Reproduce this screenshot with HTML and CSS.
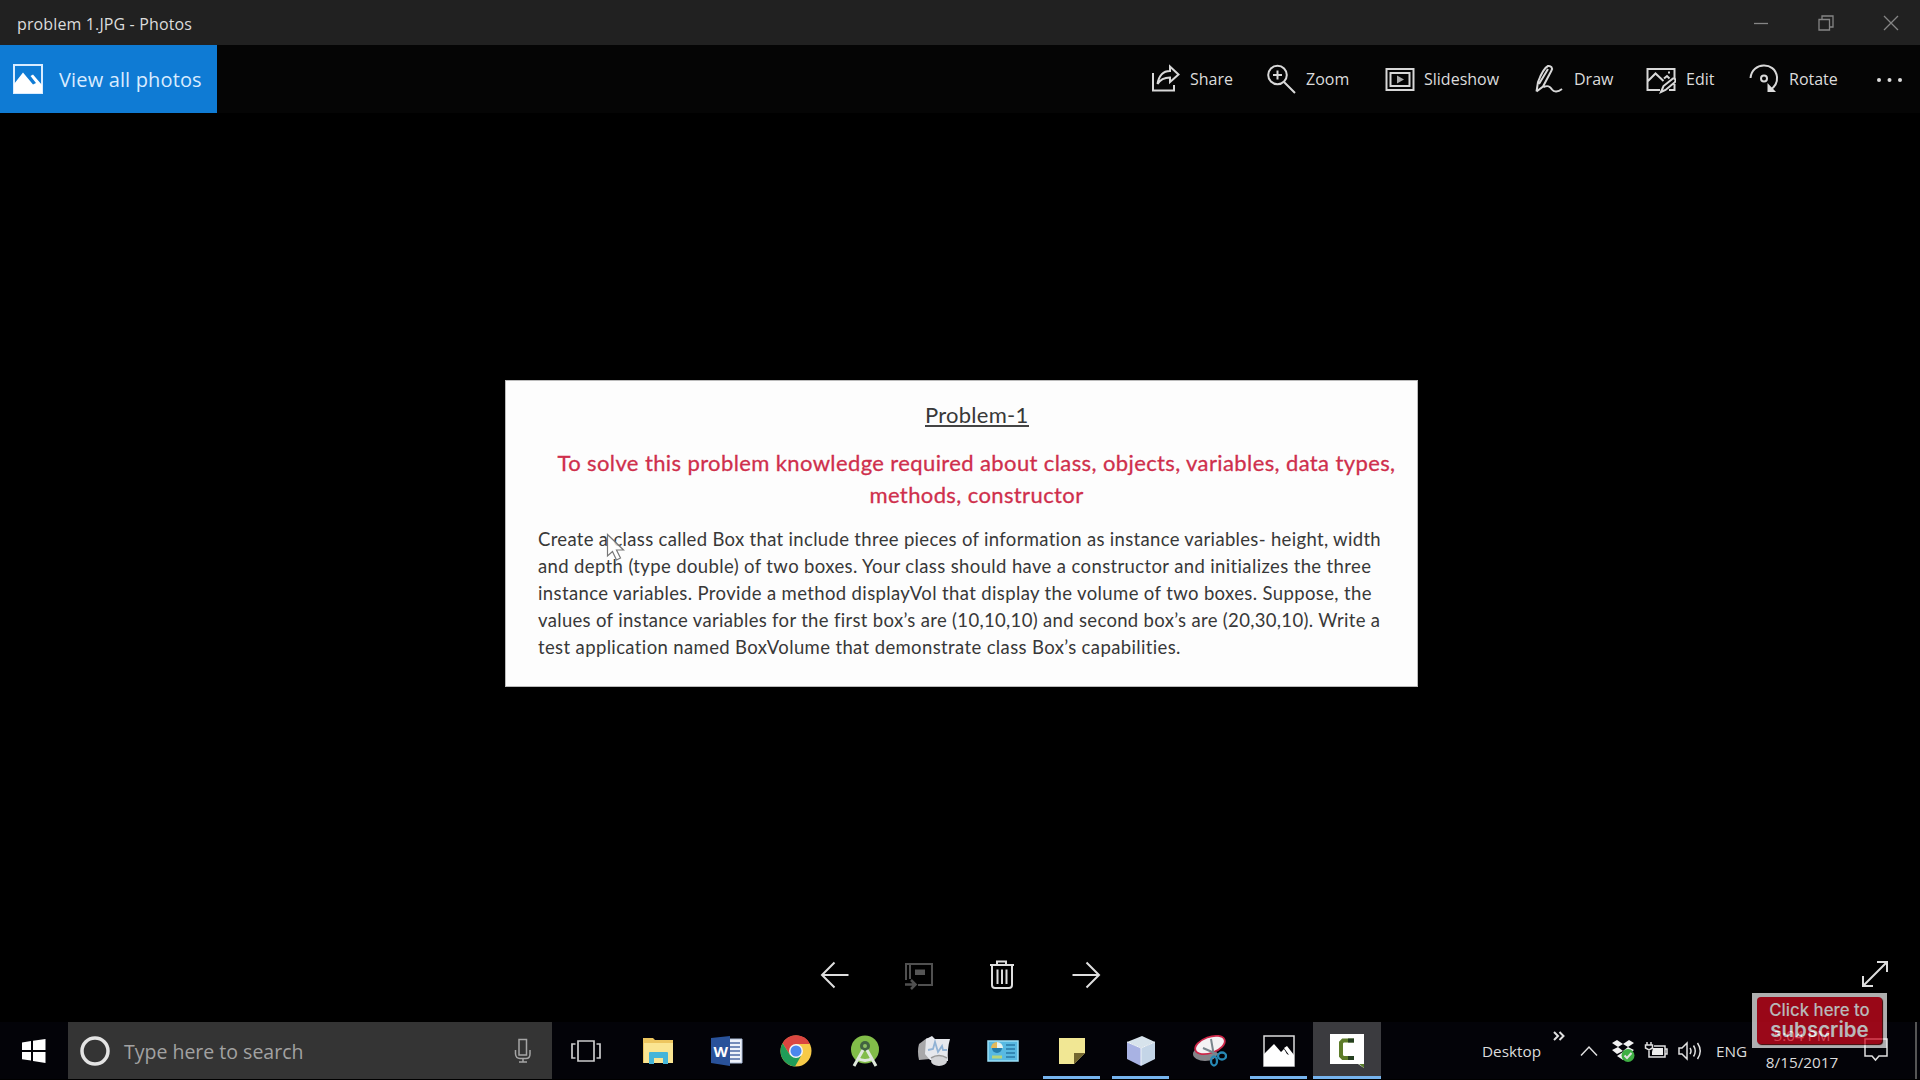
FILE: index.html
```html
<!DOCTYPE html>
<html lang="en">
<head>
<meta charset="utf-8">
<title>problem 1.JPG - Photos</title>
<link rel="stylesheet" href="styles.css">
</head>
<body>
<div class="app">
  <header class="titlebar">
    <span class="title">problem 1.JPG - Photos</span>
    <div class="win-buttons">
      <svg width="16" height="16" viewBox="0 0 16 16"><path d="M1 8.500H15"/></svg>
      <svg width="16" height="16" viewBox="0 0 16 16"><path d="M1 4.500H11.500V15H1ZM4 4V1H15V12H12"/></svg>
      <svg width="16" height="16" viewBox="0 0 16 16"><path d="M1 1L15 15M15 1L1 15"/></svg>
    </div>
  </header>

  <nav class="commandbar">
    <button class="view-all">
      <svg width="30" height="30" viewBox="0 0 30 30"><path d="M1 1H29V29H1Z" fill="none" stroke="#d9ecff" stroke-width="2"/><path d="M1 20L10 8.500L20 20.500L23 19L17.500 12L20 10.500L29 21V29H1Z" fill="#fff"/></svg>
      <span class="view-label">View all photos</span>
    </button>
    <div class="commands">
      <button class="cmd share"><svg width="30" height="30" viewBox="0 0 30 30"><path d="M2 9V26.500H23V21M6.500 20C8 11 12 7 19 7V2.500L27.500 10.500L19 18V13.500C13 13.500 9.500 15 6.500 20Z"/></svg><span>Share</span></button>
      <button class="cmd zoom"><svg width="30" height="30" viewBox="0 0 30 30"><circle cx="11.500" cy="11" r="9.300"/><path d="M18 18L29 29M11.500 6.500V15.500M7 11H16"/></svg><span>Zoom</span></button>
      <button class="cmd slides"><svg width="30" height="30" viewBox="0 0 30 30"><path d="M1.500 5H28.500V26H1.500ZM5.500 9H24.500V22H5.500Z"/><path d="M12 11.500L19 15.500L12 19.500Z" fill="#aaa" stroke="none"/></svg><span>Slideshow</span></button>
      <button class="cmd draw"><svg width="30" height="30" viewBox="0 0 30 30"><path d="M1.500 27.500L3 18C6 10 9 4 13 2C16 1.500 18 4 16.500 6.500L8 22.500L1.500 27.500M4 20L13 5M8.500 23C13 21 15 22 17 25.500C19 28.500 23 28 27 25"/></svg><span>Draw</span></button>
      <button class="cmd edit"><svg width="30" height="30" viewBox="0 0 30 30"><path d="M14 26H1.500V5H28.500V14M2 17L9.500 9.500L17.500 17M18 14.500L21 12L23.500 14.500M22 8.500H24"/><path d="M15 28L17.500 22L27 14.500C30 14 30 17 28.500 18.500L19.500 26ZM28.500 20V26H23"/></svg><span>Edit</span></button>
      <button class="cmd rotate"><svg width="30" height="30" viewBox="0 0 30 30"><path d="M1.500 14C3 -2 26 -3 28 13C28.500 18 26 23 20.500 26.500"/><circle cx="15" cy="14.500" r="3"/><path d="M18.500 19V28H27Z" fill="#ddd" stroke="none"/></svg><span>Rotate</span></button>
      <button class="cmd more"><svg width="28" height="6" viewBox="0 0 28 6"><g fill="#ddd" stroke="none"><circle cx="3" cy="3" r="2"/><circle cx="13.500" cy="3" r="2"/><circle cx="24" cy="3" r="2"/></g></svg></button>
    </div>
  </nav>

  <main class="viewer">
    <article class="photo">
      <h1>Problem-1</h1>
      <h2><span>To solve this problem knowledge required about class, objects, variables, data types,</span><span>methods, constructor</span></h2>
      <p>
        <span>Create a class called Box that include three pieces of information as instance variables- height, width</span>
        <span class="loose">and depth (type double) of two boxes. Your class should have a constructor and initializes the three</span>
        <span class="loose">instance variables. Provide a method displayVol that display the volume of two boxes. Suppose, the</span>
        <span>values of instance variables for the first box’s are (10,10,10) and second box’s are (20,30,10). Write a</span>
        <span class="loose">test application named BoxVolume that demonstrate class Box’s capabilities.</span>
      </p>
      <svg class="pointer" width="20" height="29" viewBox="0 0 20 29"><path d="M1.500 1.500V23L6.500 18.500L10.500 27L14.500 25L10.500 17H17.500Z"/></svg>
    </article>
  </main>

  <div class="photo-nav">
    <div class="nav-center">
      <svg width="30" height="30" viewBox="0 0 30 30"><path d="M28.500 15H2M14.500 2.500L2 15L14.500 27.500"/></svg>
      <svg class="dim" width="30" height="30" viewBox="0 0 30 30"><path d="M2 20V4H28V25H14M6 5V19" /><path d="M11 9.500H21V15H11Z" fill="#555" stroke="none"/><path d="M1 24.500H11M7 20L11.500 24.500L7 29" stroke-width="2.500"/></svg>
      <svg width="26" height="30" viewBox="0 0 26 30"><path d="M1 5H25M8 4V1.500H17V4M3 6V25Q3 28 6 28H20Q23 28 23 25V6M8.500 9.500V24M13 9.500V24M17.500 9.500V24"/></svg>
      <svg width="30" height="30" viewBox="0 0 30 30"><path d="M1.500 15H28M15.500 2.500L28 15L15.500 27.500"/></svg>
    </div>
    <svg class="expand" width="28" height="28" viewBox="0 0 28 28"><path d="M2.500 25.500L25.500 2.500M16 2H26V12M2 16V26H12"/></svg>
  </div>

  <footer class="taskbar">
    <div class="start"><svg width="24" height="24" viewBox="0 0 24 24"><path fill="#fff" d="M0 3.500L9 2V11H0ZM11 1.700L23.500 0V11H11ZM0 13H9V21.500L0 20.300ZM11 13H23.500V24L11 22Z"/></svg></div>
    <div class="search">
      <svg width="32" height="32" viewBox="0 0 32 32"><circle cx="16" cy="16" r="13" fill="none" stroke="#e4e4e4" stroke-width="3.500"/></svg>
      <span>Type here to search</span>
      <svg width="18" height="26" viewBox="0 0 18 26"><path d="M5 1.500H12.500V17H5ZM1.500 12V16Q2 20.500 6 20.500H12Q16 20.500 16 16V12M9 21V24M5 24H13" fill="none" stroke="#a5a5a5" stroke-width="1.500"/></svg>
    </div>
    <div class="tasks">
      <div class="task view"><svg width="30" height="24" viewBox="0 0 30 24" fill="none" stroke="#ccc" stroke-width="1.700"><path d="M7 2H23V22H7ZM4.500 5H1V19H4.500M25.500 5H29V19H25.500"/></svg></div>
      <div class="task"><svg width="32" height="32" viewBox="0 0 32 32"><path fill="#edc65f" d="M1 3H11L13 5H31V28H1Z"/><path fill="#fae592" d="M2 8H31V28H2Z"/><path fill="#45b5d9" d="M7 18Q7 17 8 17H25Q26 17 26 18V29H21V23H12V29H7Z"/></svg></div>
      <div class="task"><svg width="32" height="32" viewBox="0 0 32 32"><path fill="#eef2fa" stroke="#a9bad6" d="M17 4H31V28H17Z"/><path stroke="#4d6ba5" stroke-width="1.500" d="M19 8H29M19 12H29M19 16H29M19 20H29M19 24H29"/><path fill="#29529a" d="M0 3L19 1V31L0 28Z"/><text x="2.500" y="21.500" class="word-w">W</text></svg></div>
      <div class="task"><svg width="32" height="32" viewBox="0 0 32 32"><circle cx="16" cy="16" r="15.500" fill="#f7ca48"/><path fill="#db4640" d="M2.600 8.200A15.500 15.500 0 0 1 30 9H16L10 20Z"/><path fill="#209c58" d="M2.600 8.200L10 20L21 21L15 31.500A15.500 15.500 0 0 1 2.600 8.200Z"/><circle cx="16" cy="16" r="7" fill="#f4f4f4"/><circle cx="16" cy="16" r="5.500" fill="#4b87ed"/></svg></div>
      <div class="task"><svg width="32" height="32" viewBox="0 0 32 32"><circle cx="16" cy="14.500" r="14" fill="#82bd49"/><circle cx="16" cy="11" r="5" fill="#426341"/><circle cx="16" cy="11" r="2" fill="#8dc063"/><path d="M14 15L5 31M18 15L27 31M8 23Q16 28 24 23" fill="none" stroke="#dfe8dc" stroke-width="3"/></svg></div>
      <div class="task"><svg width="34" height="32" viewBox="0 0 34 32"><path fill="#a8a8aa" d="M2 9L10 3L17 5L13 24L2 25Q0 16 2 9Z"/><path fill="#e6e8ed" d="M9 4L15 1L18 4L33 4Q30 14 31 26L13 25L8 19Z"/><path d="M11 15L16 14L18 7L21 17L25 11L26 15H30" fill="none" stroke="#91b2d4" stroke-width="1.800"/><ellipse cx="22" cy="26" rx="8" ry="5" fill="#d4d5d8"/><path d="M14 23Q22 18 30 23" fill="none" stroke="#999" stroke-width="1.500"/></svg></div>
      <div class="task"><svg width="32" height="24" viewBox="0 0 32 24"><path fill="#58b9e2" stroke="#9be0f7" stroke-width="1.500" d="M1 2H31V22H1Z"/><circle cx="10" cy="9" r="5" fill="#247dac"/><path fill="#e8f3ef" d="M10 9V3A6 6 0 0 1 16 9Z"/><path fill="#e5b959" d="M10 9H4A6 6 0 0 1 10 3Z"/><path d="M19 6H28M19 10H28M19 14H28M19 18H28" stroke="#2878a7" stroke-width="1.500"/><path d="M5 18H15" stroke="#b7d57a" stroke-width="3"/></svg></div>
      <div class="task open"><svg width="28" height="28" viewBox="0 0 28 28"><path fill="#f1e794" d="M1 1H27V16L16 27H1Z"/><path fill="#74672f" d="M16 16H27L16 27Z"/></svg></div>
      <div class="task open"><svg width="32" height="32" viewBox="0 0 32 32"><path fill="#d7e3ec" d="M2 7L17 1L30 7L16 13Z"/><path fill="#a8b2e3" d="M2 7L16 13V31L2 24Z"/><path fill="#c4d5e7" d="M16 13L30 7V24L16 31Z"/><path d="M2 7L16 13L30 7M16 13V30" fill="none" stroke="#eef4f9"/></svg></div>
      <div class="task"><svg width="34" height="34" viewBox="0 0 34 34"><ellipse cx="12" cy="20" rx="12" ry="7" fill="#85858a"/><ellipse cx="17" cy="11" rx="15.500" ry="8" fill="#f4f2f4" stroke="#cc2749" stroke-width="1.800" transform="rotate(-20 17 11)"/><path d="M18 5L21 22M10 14L26 21" stroke="#7a858d" stroke-width="2"/><g fill="none" stroke="#2789b5" stroke-width="2.300"><ellipse cx="21" cy="27" rx="3" ry="4.500"/><ellipse cx="29" cy="22" rx="4" ry="3.500"/></g></svg></div>
      <div class="task open"><svg width="32" height="32" viewBox="0 0 32 32"><path d="M1 1H31V31H1Z" fill="none" stroke="#ddd" stroke-width="1.500"/><path fill="#fff" d="M1 19L11 9L18 17L21 14L24 19L26 20L21 13L24 11L31 20V31H1Z"/></svg></div>
      <div class="task open active"><svg width="36" height="36" viewBox="0 0 36 36"><path fill="#fff" d="M1 1H35V35L29 31H1Z"/><path fill="#577b2b" d="M1 31H30L35 35V31Z"/><path d="M25 7.500H14L12 9.500V23L14 25H25" fill="none" stroke="#5d7c29" stroke-width="4"/><path d="M19 7.500H25M19 25H25" stroke="#253f20" stroke-width="4"/></svg></div>
    </div>
    <div class="tray">
      <span class="desktop">Desktop</span>
      <svg class="guil" width="12" height="10" viewBox="0 0 12 10"><path d="M1 1L5 5L1 9M6.500 1L10.500 5L6.500 9"/></svg>
      <svg class="chev" width="18" height="12" viewBox="0 0 18 12"><path d="M1 10.500L9 2L17 10.500"/></svg>
      <svg class="dropbox" width="25" height="24" viewBox="0 0 25 24"><path fill="#f1f1f1" stroke="none" d="M1 4L6 1L12 5L7 8ZM12 5L18 1L23 4L17 8ZM1 11L7 8L12 12L6 15ZM12 12L17 8L23 11L18 15ZM6 17L12 13L18 17L12 21Z"/><circle cx="17" cy="16.500" r="6.500" fill="#3eae43" stroke="none"/><path d="M13.500 16.500L16 19L20.500 14" stroke-width="2"/></svg>
      <svg class="battery" width="24" height="19" viewBox="0 0 24 19"><path d="M3 1V4M7 1V4M1.500 4H8.500V7L5 9L1.500 7ZM5 9V16H21V5H10M21.500 8H23V13H21.500"/><path fill="#eee" stroke="none" d="M9 7H19V14H8V11Z"/></svg>
      <svg class="speaker" width="25" height="20" viewBox="0 0 25 20"><path d="M1 7H4L9 2V18L4 13H1ZM12 7Q14 10 12 13M15.500 4.500Q19 10 15.500 15.500M19.500 2Q25 10 19.500 18"/></svg>
      <span class="lang">ENG</span>
      <div class="clock"><span>5:04 PM</span><span>8/15/2017</span></div>
      <svg class="action" width="24" height="25" viewBox="0 0 24 25"><path d="M1 1H23V18H15L11.500 22L8 18H1Z"/></svg>
      <div class="show-desktop"></div>
    </div>
  </footer>
  <a class="subscribe"><span class="sub-top">Click here to</span><span class="sub-bottom">subscribe</span></a>
</div>
</body>
</html>
```
FILE: styles.css
```css
* { box-sizing: border-box; }
body { margin: 0; background: #000; }
.app {
  position: relative;
  display: flex;
  flex-direction: column;
  width: 1920px;
  height: 1080px;
  overflow: hidden;
  background: #000;
  color: #dcdcdc;
  font-family: "Open Sans", "Noto Sans", sans-serif;
}
svg { display: block; flex: none; }
span { white-space: nowrap; }
button { border: 0; padding: 0; background: none; color: inherit; font: inherit; }

.titlebar {
  display: flex;
  align-items: center;
  justify-content: space-between;
  height: 45px;
  flex: none;
  padding: 2px 21px 0 17px;
  background: #212121;
}
.title { font-size: 16px; line-height: 20px; letter-spacing: .13px; }
.win-buttons { display: flex; gap: 49px; margin-top: -1px; }
.win-buttons svg { fill: none; stroke: #858585; stroke-width: 1.3; }

.commandbar {
  display: flex;
  justify-content: space-between;
  height: 68px;
  flex: none;
  background: #050505;
}
.view-all {
  display: flex;
  align-items: center;
  gap: 16px;
  width: 217px;
  padding: 0 0 0 13px;
  background: #0f7bd4;
  color: #d9ecff;
  font-size: 20px;
  letter-spacing: .15px;
}
.view-all svg { margin-top: -1px; }
.view-all span { padding-top: 1px; }
.commands { display: flex; width: 769px; font-size: 16px; }
.cmd { display: flex; align-items: center; gap: 9px; flex: none; }
.cmd svg { fill: none; stroke: #d8d8d8; stroke-width: 2; }
.share { width: 115px; }
.zoom { width: 119px; gap: 10px; }
.slides { width: 150px; }
.draw { width: 111px; }
.edit { width: 103px; gap: 10px; }
.rotate { width: 127px; gap: 10px; }
.more { padding-top: 1px; }

.viewer { height: 817px; flex: none; padding: 267px 0 0 505px; }
.photo {
  position: relative;
  width: 913px;
  height: 307px;
  padding: 19px 37px 0 32px;
  background: #fdfdfd;
  border: 1px solid #bbb;
  color: #383838;
  font-family: Lato, "Open Sans", sans-serif;
}
.photo h1 {
  width: 104px;
  height: 27px;
  margin: 0 0 0 387px;
  border-bottom: 2px solid #444;
  font-size: 22px;
  font-weight: 400;
  line-height: 30px;
  letter-spacing: .25px;
  white-space: nowrap;
}
.photo h2 {
  display: flex;
  flex-direction: column;
  align-items: center;
  margin: 20px 0 0 19px;
  width: 839px;
  color: #cf2f4c;
  -webkit-text-stroke: .3px #cf2f4c;
  font-size: 22px;
  font-weight: 400;
  letter-spacing: .39px;
  line-height: 32px;
}
.photo p {
  display: flex;
  flex-direction: column;
  align-items: flex-start;
  margin: 15px 0 0;
  font-size: 18.5px;
  line-height: 27px;
  letter-spacing: .325px;
}
.photo .loose { letter-spacing: .37px; }
.pointer { position: absolute; left: 100px; top: 152px; fill: #fff; fill-opacity: .75; stroke: #777; stroke-width: 1.2; }

.photo-nav { display: flex; height: 92px; flex: none; padding: 30px 31px 0 820px; justify-content: space-between; }
.nav-center { display: flex; gap: 56px; }
.photo-nav svg { fill: none; stroke: #dedede; stroke-width: 2; }
.photo-nav .dim { stroke: #505050; margin: 0 -1px 0 -2px; }

.taskbar { display: flex; height: 57px; flex: none; background: #030308; }
.start { width: 68px; padding: 17px 0 0 22px; }
.search {
  display: flex;
  align-items: center;
  width: 484px;
  padding: 0 20px 0 11px;
  background: #343434;
  color: #a2a2a2;
  font-size: 19.5px;
}
.search span { margin-left: 13px; padding-top: 1px; flex: 1; }
.tasks { display: flex; }
.task { display: flex; align-items: center; justify-content: center; width: 69px; }
.view { width: 71px; padding-right: 4px; }
.open { position: relative; }
.open::after { content: ""; position: absolute; left: 6px; right: 6px; bottom: 0; height: 3px; background: #76b4ee; }
.task.active { width: 68px; background: #3b3b3f; }
.active::after { left: 0; right: 0; }
.word-w { fill: #fff; font: bold 15px "Open Sans", sans-serif; }
.tray { display: flex; align-items: center; flex: 1; padding-left: 101px; font-size: 15.3px; }
.tray svg { fill: none; stroke: #e0e0e0; stroke-width: 1.5; }
.desktop { width: 71px; }
.tray .guil { margin: -30px 15px 0 0; stroke-width: 2; }
.chev { margin-right: 13px; }
.dropbox { margin-right: 8px; }
.battery { margin-right: 10px; }
.speaker { margin-right: 13px; }
.lang { width: 50px; }
.clock { display: flex; flex-direction: column; align-items: center; width: 72px; gap: 2px; line-height: 25px; padding-bottom: 3px; }
.action { margin: 0 0 0 26px; }
.show-desktop { width: 2px; height: 57px; margin-left: 27px; background: #555; }

.subscribe {
  position: absolute;
  left: 1752px;
  top: 993px;
  width: 135px;
  height: 55px;
  display: flex;
  flex-direction: column;
  align-items: center;
  padding-top: 7px;
  color: #fff;
  font-family: Inter, sans-serif;
  background: #f2f2f2;
  opacity: .72;
}
.subscribe::before {
  content: "";
  position: absolute;
  inset: 4px 5px 4px 5px;
  border-radius: 4px;
  background: #d40a20;
  box-shadow: 1px 1px 1px #500;
}
.subscribe span { position: relative; line-height: 20px; }
.sub-top { font-size: 16.8px; font-weight: 500; }
.sub-bottom { font-size: 20.5px; font-weight: 600; }
```
